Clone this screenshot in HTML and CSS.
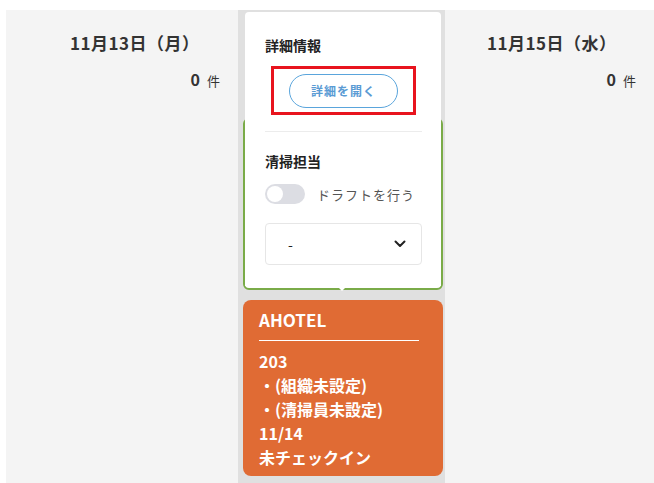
FILE: index.html
```html
<!DOCTYPE html>
<html lang="ja">
<head>
<meta charset="utf-8">
<link rel="stylesheet" href="styles.css">
</head>
<body>
<div class="board">
  <div class="col col-left">
    <div class="day-head day-head-left">11月13日（月）</div>
    <div class="count"><span class="num">0</span><span class="unit">件</span></div>
  </div>
  <div class="col col-mid">
    <div class="sel-card"></div>
    <div class="task-card">
      <div class="hotel">AHOTEL</div>
      <div class="rule"></div>
      <div class="line">203</div>
      <div class="line">・(組織未設定)</div>
      <div class="line">・(清掃員未設定)</div>
      <div class="line">11/14</div>
      <div class="line">未チェックイン</div>
    </div>
    <div class="popup">
      <div class="p-title">詳細情報</div>
      <div class="hl-box"><button class="open-btn">詳細を開く</button></div>
      <div class="divider"></div>
      <div class="p-title p-title2">清掃担当</div>
      <div class="toggle-row"><span class="toggle"><span class="knob"></span></span><span class="toggle-label">ドラフトを行う</span></div>
      <div class="select"><span>-</span>
        <svg width="12" height="8" viewBox="0 0 12 8"><path d="M1.5 1.5 L6 6 L10.5 1.5" fill="none" stroke="#222" stroke-width="2" stroke-linecap="round" stroke-linejoin="round"/></svg>
      </div>
      <span class="arrow"></span>
    </div>
  </div>
  <div class="col col-right">
    <div class="day-head day-head-right">11月15日（水）</div>
    <div class="count"><span class="num">0</span><span class="unit">件</span></div>
  </div>
</div>
</body>
</html>
```
FILE: styles.css
```css
html, body { margin: 0; padding: 0; background: #fff; }
body { font-family: "Noto Sans CJK JP", "Noto Sans", sans-serif; color: #333; }
.board { display: flex; margin: 10px 0 0 6px; height: 473px; overflow: hidden; }
.col { background: #f4f4f4; box-sizing: border-box; }
.col-left { width: 232px; padding-right: 18px; }
.col-mid { width: 207px; background: #e0e0e0; padding: 108px 2px 0 5px; position: relative; }
.col-right { flex: 1; padding-right: 18px; }
.day-head { font-size: 17px; font-weight: 700; line-height: 24px; padding-top: 21px; color: #333; letter-spacing: 0.5px; }
.day-head-left { padding-left: 64px; }
.day-head-right { padding-left: 42px; }
.count { text-align: right; margin-top: 12px; line-height: 24px; }
.num { font-size: 16px; font-weight: 700; }
.unit { font-size: 13px; margin-left: 7px; }
.sel-card { height: 172px; border: 2px solid #7aab48; border-radius: 6px; box-sizing: border-box; background: #fff; }
.task-card { margin-top: 10px; height: 176px; background: #e06b34; border-radius: 8px; color: #fff; padding: 9px 24px 0 16px; box-sizing: border-box; font-weight: 700; }
.hotel { font-size: 17px; line-height: 22px; }
.rule { height: 1px; background: #fff; margin: 9px 0 8px; }
.line { font-size: 16px; line-height: 24px; }
.popup { position: absolute; top: 2px; left: 7px; width: 196px; height: 274px; background: #fff; border-radius: 4px 4px 0 0; box-sizing: border-box; padding: 23px 19px 0 20px; }
.p-title { font-size: 14px; font-weight: 700; line-height: 20px; color: #222; }
.hl-box { width: 145px; height: 49px; margin: 11px auto 0; border: 3px solid #e8141e; box-sizing: border-box; display: flex; align-items: center; justify-content: center; }
.open-btn { width: 109px; height: 34px; border: 1px solid #5aa5dc; border-radius: 17px; background: #fff; color: #5a9bd4; font-family: inherit; font-size: 12px; font-weight: 700; letter-spacing: 1px; padding: 0; }
.divider { height: 1px; background: #ececec; margin-top: 16px; }
.p-title2 { margin-top: 19px; }
.toggle-row { display: flex; align-items: center; margin-top: 13px; height: 20px; }
.toggle { width: 40px; height: 20px; border-radius: 10px; background: #dcdde3; position: relative; display: block; }
.knob { position: absolute; left: 2px; top: 2px; width: 16px; height: 16px; border-radius: 50%; background: #fff; }
.toggle-label { font-size: 13px; color: #555; margin-left: 12px; letter-spacing: 1px; }
.select { margin-top: 19px; height: 42px; border: 1px solid #e6e6e6; border-radius: 4px; box-sizing: border-box; display: flex; align-items: center; justify-content: space-between; padding: 0 15px 0 22px; font-size: 14px; color: #222; }
.arrow { position: absolute; left: 92px; bottom: -5px; width: 0; height: 0; border-left: 5px solid transparent; border-right: 5px solid transparent; border-top: 5px solid #fff; }
```
